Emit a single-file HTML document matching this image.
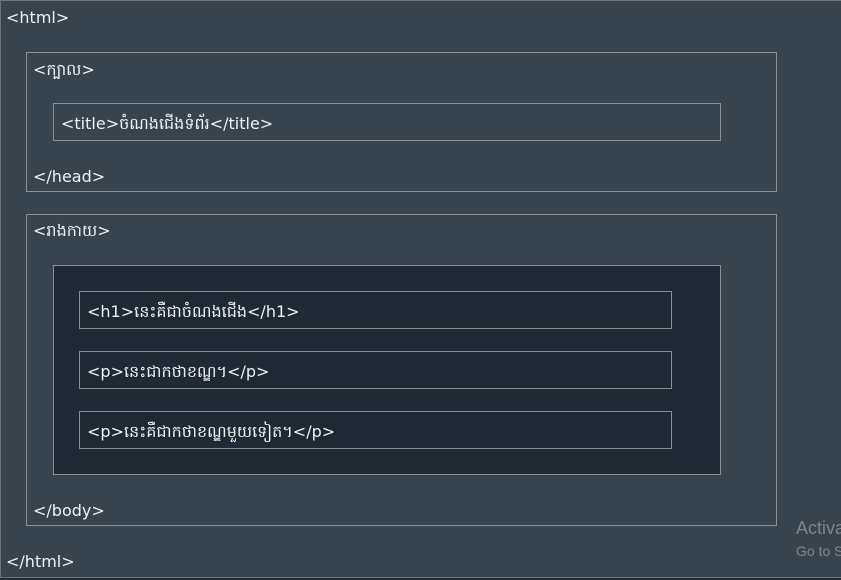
<html><head><style>
body{margin:0;width:841px;height:580px;background:#1f2a33;overflow:hidden;font-family:"DejaVu Sans","Liberation Sans",sans-serif;color:#eef1f3;font-size:16px;position:relative}
.b{position:absolute;box-sizing:border-box;border:1px solid #8a9096}
.t{position:absolute;white-space:nowrap;line-height:20px}
</style></head><body>
<div class="b" style="left:0;top:0;width:841px;height:578px;background:#37434d;border-color:#6c747b;border-right:none"></div>
<div class="t" style="left:6px;top:8px">&lt;html&gt;</div>
<div class="b" style="left:26px;top:52px;width:751px;height:140px;background:#37434d"></div>
<div class="t" style="left:33px;top:60px">&lt;ក្បាល&gt;</div>
<div class="b" style="left:53px;top:103px;width:668px;height:38px"></div>
<div class="t" style="left:61px;top:114px">&lt;title&gt;ចំណងជើងទំព័រ&lt;/title&gt;</div>
<div class="t" style="left:33px;top:167px">&lt;/head&gt;</div>
<div class="b" style="left:26px;top:214px;width:751px;height:312px"></div>
<div class="t" style="left:33px;top:221px">&lt;រាងកាយ&gt;</div>
<div class="b" style="left:53px;top:265px;width:668px;height:210px;background:#1e2934"></div>
<div class="b" style="left:79px;top:291px;width:593px;height:38px"></div>
<div class="t" style="left:87px;top:302px">&lt;h1&gt;នេះគឺជាចំណងជើង&lt;/h1&gt;</div>
<div class="b" style="left:79px;top:351px;width:593px;height:38px"></div>
<div class="t" style="left:87px;top:362px">&lt;p&gt;នេះជាកថាខណ្ឌ។&lt;/p&gt;</div>
<div class="b" style="left:79px;top:411px;width:593px;height:38px"></div>
<div class="t" style="left:87px;top:422px">&lt;p&gt;នេះគឺជាកថាខណ្ឌមួយទៀត។&lt;/p&gt;</div>
<div class="t" style="left:33px;top:501px">&lt;/body&gt;</div>
<div class="t" style="left:6px;top:552px">&lt;/html&gt;</div>
<div style="position:absolute;left:796px;top:515px;width:45px;height:45px;overflow:hidden">
<div class="t" style="left:0;top:3px;font-size:18px;color:#7d868d;font-family:'Liberation Sans',sans-serif">Activate</div>
<div class="t" style="left:0;top:26px;font-size:14px;color:#7d868d;font-family:'Liberation Sans',sans-serif">Go to Settings</div>
</div>
</body></html>
